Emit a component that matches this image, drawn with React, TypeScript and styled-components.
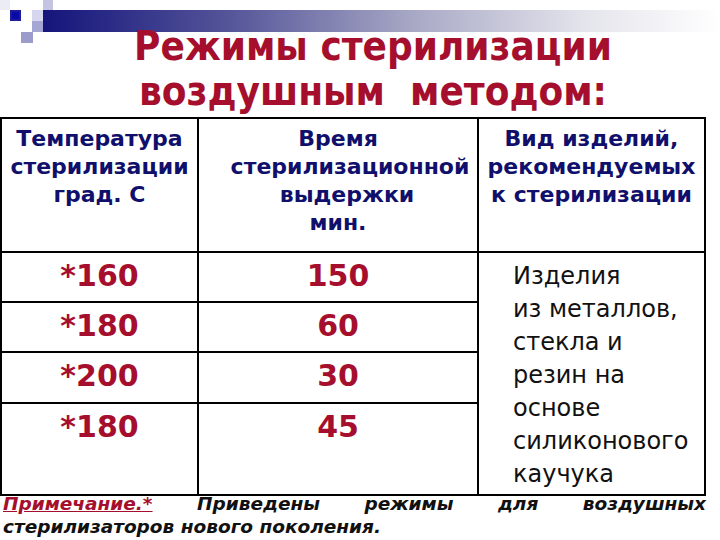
import React from 'react';
import styled, { createGlobalStyle } from 'styled-components';

const GlobalStyle = createGlobalStyle`
  html, body {
    margin: 0;
    padding: 0;
    background: #ffffff;
  }
  body {
    width: 720px;
    height: 540px;
    overflow: hidden;
    font-family: 'DejaVu Sans', Verdana, sans-serif;
  }
`;

const colors = {
  red: '#a50f2d',
  navy: '#10106c',
  text: '#111111',
};

const rows = [
  { temp: '*160', time: '150' },
  { temp: '*180', time: '60' },
  { temp: '*200', time: '30' },
  { temp: '*180', time: '45' },
];

function Decor() {
  return (
    <DecorSvg width="720" height="44" viewBox="0 0 720 44">
      <defs>
        <linearGradient id="bar" x1="0" x2="1" y1="0" y2="0">
          <stop offset="0" stopColor="#14147c" />
          <stop offset="0.28" stopColor="#56569a" />
          <stop offset="0.55" stopColor="#a9a9c6" />
          <stop offset="0.8" stopColor="#e4e4ec" />
          <stop offset="1" stopColor="#ffffff" />
        </linearGradient>
      </defs>
      <rect x="0" y="0" width="10" height="10" fill="#ececf6" />
      <rect x="43" y="0" width="10" height="10" fill="#c4c4e2" />
      <rect x="32" y="10" width="21" height="11" fill="#d6d6ee" />
      <rect x="10" y="10" width="11" height="11" fill="#1c1c96" />
      <rect x="12" y="12" width="7" height="7" fill="#0a0aa8" />
      <rect x="32" y="21" width="11" height="11" fill="#a6a6d4" />
      <rect x="21" y="32" width="12" height="11" fill="#9c9ccc" />
      <rect x="43" y="10" width="677" height="22" fill="url(#bar)" />
    </DecorSvg>
  );
}

export default function App() {
  return (
    <>
      <GlobalStyle />
      <Slide>
        <Decor />
        <Title>
          Режимы стерилизации
          <br />
          воздушным&nbsp; методом:
        </Title>
        <Table>
          <HeadCell>
            <HeadLine>Температура</HeadLine>
            <HeadLine>стерилизации</HeadLine>
            <HeadLine>град. С</HeadLine>
          </HeadCell>
          <HeadCell>
            <HeadLine>Время</HeadLine>
            <HeadLine $shift={24}>стерилизационной</HeadLine>
            <HeadLine $shift={18}>выдержки</HeadLine>
            <HeadLine>мин.</HeadLine>
          </HeadCell>
          <HeadCell>
            <HeadLine>Вид изделий,</HeadLine>
            <HeadLine>рекомендуемых</HeadLine>
            <HeadLine>к стерилизации</HeadLine>
          </HeadCell>
          {rows.map((r, i) => (
            <React.Fragment key={i}>
              <NumCell $col={1} $row={i + 2}>{r.temp}</NumCell>
              <NumCell $col={2} $row={i + 2}>{r.time}</NumCell>
            </React.Fragment>
          ))}
          <ItemsCell>
            Изделия
            <br />
            из металлов,
            <br />
            стекла и
            <br />
            резин на
            <br />
            основе
            <br />
            силиконового
            <br />
            каучука
          </ItemsCell>
        </Table>
        <Note>
          <NoteLine $justify>
            <NoteLabel>Примечание.*</NoteLabel> Приведены режимы для воздушных
          </NoteLine>
          <NoteLine>стерилизаторов нового поколения.</NoteLine>
        </Note>
      </Slide>
    </>
  );
}

const Slide = styled.div`
  position: relative;
  width: 720px;
  height: 540px;
  background: #ffffff;
`;

const DecorSvg = styled.svg`
  position: absolute;
  top: 0;
  left: 0;
  display: block;
`;

const Title = styled.h1`
  position: relative;
  margin: 0;
  padding: 24px 0 0 26px;
  box-sizing: border-box;
  height: 117px;
  text-align: center;
  font-family: 'DejaVu Sans Condensed', 'DejaVu Sans', Verdana, sans-serif;
  font-stretch: condensed;
  font-weight: bold;
  font-size: 40px;
  line-height: 45px;
  color: ${colors.red};
`;

const Table = styled.div`
  display: grid;
  grid-template-columns: 195px 278px 225px;
  grid-template-rows: 132px 48px 48px 49px 90px;
  gap: 2px;
  padding: 2px;
  width: 706px;
  box-sizing: border-box;
  background: #000000;
`;

const Cell = styled.div`
  background: #ffffff;
  box-sizing: border-box;
`;

const HeadCell = styled(Cell)`
  padding-top: 6px;
  text-align: center;
  font-weight: bold;
  font-size: 22px;
  line-height: 28px;
  color: ${colors.navy};
`;

const HeadLine = styled.div<{ $shift?: number }>`
  padding-left: ${(p) => p.$shift ?? 0}px;
  white-space: nowrap;
`;

const NumCell = styled(Cell)<{ $col: number; $row: number }>`
  grid-column: ${(p) => p.$col};
  grid-row: ${(p) => p.$row};
  padding-top: 5px;
  text-align: center;
  font-weight: bold;
  font-size: 30px;
  line-height: 36px;
  color: ${colors.red};
`;

const ItemsCell = styled(Cell)`
  grid-column: 3;
  grid-row: 2 / span 4;
  padding: 7px 0 0 34px;
  font-size: 24px;
  line-height: 33px;
  color: ${colors.text};
`;

const Note = styled.div`
  margin: -4px 0 0 3px;
  width: 703px;
  font-weight: bold;
  font-style: italic;
  font-size: 18.5px;
  line-height: 23px;
  color: ${colors.text};
`;

const NoteLine = styled.div<{ $justify?: boolean }>`
  text-align: ${(p) => (p.$justify ? 'justify' : 'left')};
  text-align-last: ${(p) => (p.$justify ? 'justify' : 'auto')};
`;

const NoteLabel = styled.span`
  color: ${colors.red};
  text-decoration: underline;
`;
